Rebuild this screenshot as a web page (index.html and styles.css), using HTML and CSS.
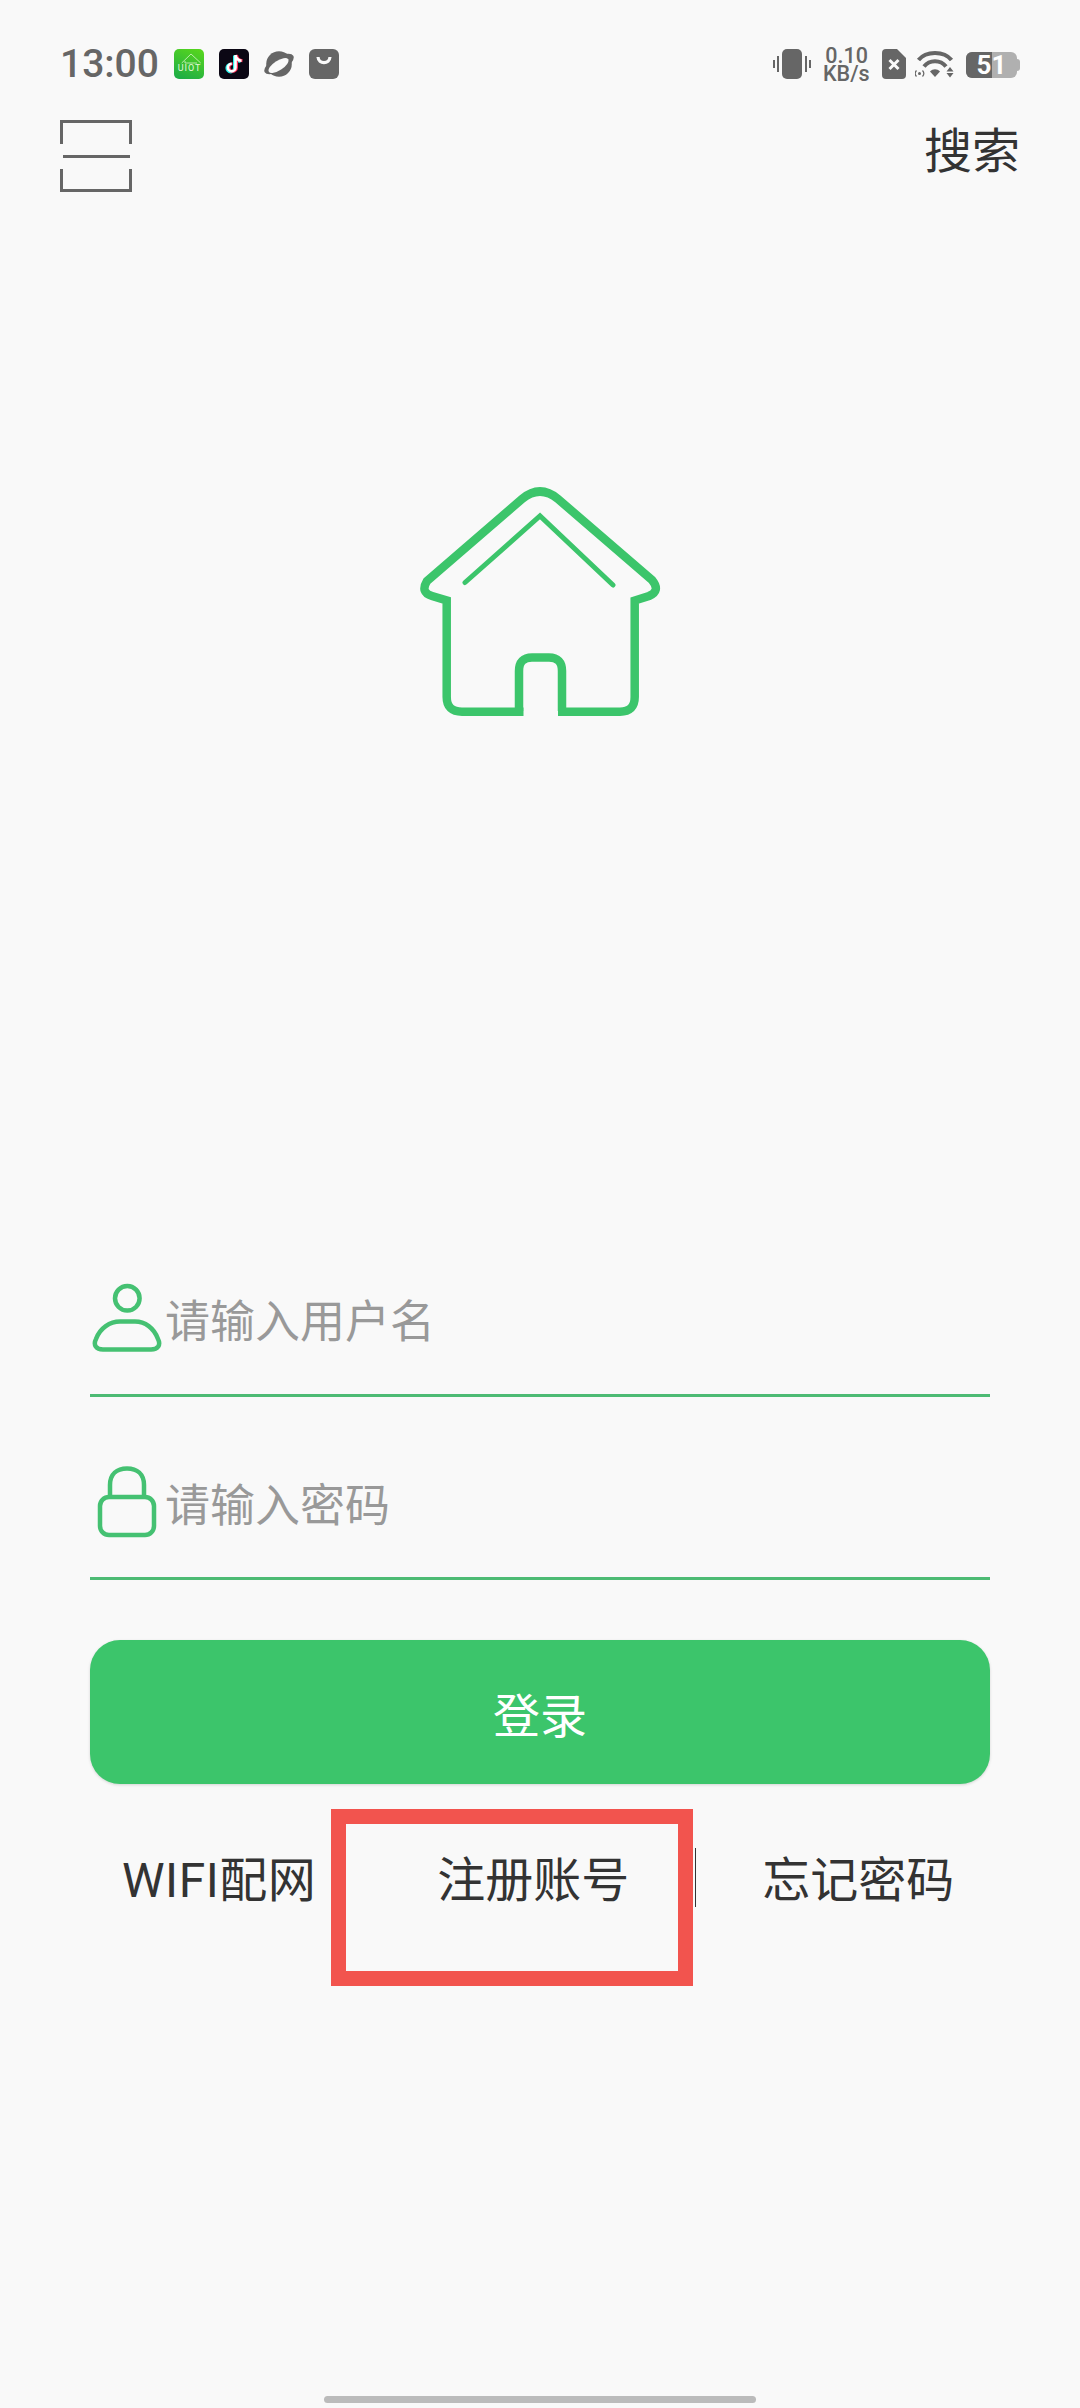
FILE: index.html
```html
<!DOCTYPE html>
<html>
	<head>
		<meta charset="utf8">
		<title>登录</title>
		<link rel="stylesheet" href="styles.css">
	</head>
	<body>
		<div id="page">
			<div id="status_bar">
				<div class="status_left">
					<span class="clock">13:00</span>
					<svg class="app_icon" viewBox="0 0 30 30">
						<defs>
							<linearGradient id="uiot_bg" x1="0.7" y1="0" x2="0.3" y2="1">
								<stop offset="0" stop-color="#55d41f"/>
								<stop offset="1" stop-color="#1fae45"/>
							</linearGradient>
						</defs>
						<rect width="30" height="30" rx="5" fill="url(#uiot_bg)"/>
						<path d="M7.7 14 L17 5 L26.7 14 M11 12 V14 H23" fill="none" stroke="#d8f5c8" stroke-width="0.8"/>
						<text x="15.5" y="22" class="uiot_text">UIOT</text>
					</svg>
					<svg class="app_icon" viewBox="0 0 30 30">
						<rect width="30" height="30" rx="5" fill="#0b0714"/>
						<path d="M16.5 6 V18.5 A3.8 3.8 0 1 1 12.7 14.7 M16.5 6 C17 9.5 19.5 11.5 22.5 11.8" fill="none" stroke="#25f4ee" stroke-width="3" transform="translate(-1 0.6)"/>
						<path d="M16.5 6 V18.5 A3.8 3.8 0 1 1 12.7 14.7 M16.5 6 C17 9.5 19.5 11.5 22.5 11.8" fill="none" stroke="#fe2c55" stroke-width="3" transform="translate(1 0)"/>
						<path d="M16.5 6 V18.5 A3.8 3.8 0 1 1 12.7 14.7 M16.5 6 C17 9.5 19.5 11.5 22.5 11.8" fill="none" stroke="#fff" stroke-width="2.6"/>
					</svg>
					<svg class="app_icon" viewBox="0 0 30 30">
						<circle cx="15" cy="15" r="12.8" fill="#666"/>
						<ellipse cx="15" cy="15" rx="16.5" ry="7" transform="rotate(-30 15 15)" fill="#666"/>
						<ellipse cx="14.5" cy="16.5" rx="11.5" ry="4.8" transform="rotate(-33 14.5 16.5)" fill="#f9f9f9"/>
					</svg>
					<svg class="app_icon" viewBox="0 0 30 30">
						<rect width="30" height="30" rx="6" fill="#666"/>
						<path d="M9 8 C9.5 15.5 20.5 15.5 21 8" fill="none" stroke="#f9f9f9" stroke-width="3.2"/>
					</svg>
				</div>
				<div class="status_right">
					<svg class="icon_vibrate" viewBox="0 0 38 30">
						<rect x="9" y="0" width="20" height="30" rx="5" fill="#666"/>
						<path d="M5 7 V23 M1 11 V19 M33 7 V23 M37 11 V19" stroke="#666" stroke-width="2" fill="none"/>
					</svg>
					<div class="net_speed">0.10<br>KB/s</div>
					<svg class="icon_sim" viewBox="0 0 24 30">
						<path d="M4 0 H15 L24 9 V26 A4 4 0 0 1 20 30 H4 A4 4 0 0 1 0 26 V4 A4 4 0 0 1 4 0 Z" fill="#666"/>
						<path d="M7.5 11 L16.5 20 M16.5 11 L7.5 20" stroke="#f9f9f9" stroke-width="3" fill="none"/>
					</svg>
					<svg class="icon_wifi" viewBox="0 0 40 28">
						<path d="M3.5 10 C11 0.5 29 0.5 36.5 10" fill="none" stroke="#666" stroke-width="4"/>
						<path d="M9 16.5 C14.5 9.5 25.5 9.5 31 16.5" fill="none" stroke="#666" stroke-width="4"/>
						<path d="M15 21.5 L20 27 L25 21.5 C22 18.5 18 18.5 15 21.5 Z" fill="#666"/>
						<circle cx="4.5" cy="23.5" r="1.5" fill="#666"/>
						<path d="M1.5 20.5 A4.5 4.5 0 0 0 1.5 26.5 M7.5 20.5 A4.5 4.5 0 0 1 7.5 26.5" fill="none" stroke="#666" stroke-width="1.2"/>
						<path d="M35 17 L38.5 21.5 H31.5 Z M31.5 23 H38.5 L35 27.5 Z" fill="#666"/>
					</svg>
					<div class="battery">
						<div class="battery_body">
							<div class="battery_fill"></div>
							<span class="battery_num">51</span>
						</div>
						<div class="battery_cap"></div>
					</div>
				</div>
			</div>

			<div id="top_bar">
				<svg class="icon_scan" viewBox="0 0 72 72">
					<path d="M1.5 24 V1.5 H70.5 V24 M1.5 49 V70.5 H70.5 V49" fill="none" stroke="#666" stroke-width="3"/>
					<path d="M3 36.5 H70" fill="none" stroke="#666" stroke-width="3"/>
				</svg>
				<span class="search_btn">搜索</span>
			</div>

			<svg class="logo" viewBox="0 0 280 260">
				<path class="logo_line" d="M123.5 241.7 H62 Q46.7 241.7 46.7 227 V130.5 L32 126 Q20 122.5 27 111 L122 29 Q140 14 158 29 L252 110 Q261 121 249 126 L234.7 130.5 V227 Q234.7 241.7 220 241.7 H158"/>
				<path class="logo_line" d="M119 241 V201 Q119 187.5 132 187.5 H149 Q162 187.5 162 201 V241"/>
				<path class="logo_roof" d="M65 112.5 L140 46 L213 115"/>
			</svg>

			<div id="login_form">
				<div class="field field_user">
					<svg class="field_icon" viewBox="0 0 72 72">
						<circle cx="37.3" cy="16.3" r="12.3" class="field_line"/>
						<path class="field_line" d="M13 67.5 C6 67.5 3 63 6 57 C10 46 20 39.5 30 39.5 H45 C55 39.5 64 46 68 57 C71 63 68 67.5 61 67.5 Z"/>
					</svg>
					<span class="field_text">请输入用户名</span>
				</div>
				<div class="field field_pwd">
					<svg class="field_icon" viewBox="0 0 72 72">
						<path class="field_line" d="M20 31 V19 C20 8 27 2.5 37 2.5 C47 2.5 54 8 54 19 V31"/>
						<rect class="field_line" x="10" y="31" width="54" height="38" rx="9"/>
					</svg>
					<span class="field_text">请输入密码</span>
				</div>
				<div class="login_btn">登录</div>
			</div>

			<div id="links">
				<span class="link link_wifi">WIFI配网</span>
				<span class="link link_reg">注册账号</span>
				<span class="link_sep"></span>
				<span class="link link_forget">忘记密码</span>
				<div class="mark_box"></div>
			</div>

			<div class="home_bar"></div>
		</div>
	</body>
</html>
```

FILE: styles.css
```css
*{
	box-sizing:border-box;
}
html,body{
	margin:0;
	padding:0;
}
body{
	background:#f9f9f9;
	font-family:"Roboto","Noto Sans CJK SC",sans-serif;
}
#page{
	width:1080px;
	height:2408px;
	overflow:hidden;
	display:flex;
	flex-direction:column;
	align-items:center;
}
#status_bar{
	width:100%;
	height:120px;
	padding:47px 60px 0 60px;
	display:flex;
	justify-content:space-between;
	align-items:flex-start;
}
.status_left{
	display:flex;
	align-items:center;
	height:34px;
}
.clock{
	width:114px;
	font-size:39px;
	font-weight:500;
	line-height:34px;
	color:#666;
}
.app_icon{
	width:30px;
	height:30px;
	margin-right:15px;
}
.uiot_text{
	font-size:9px;
	fill:#e6f8d8;
	text-anchor:middle;
	letter-spacing:1px;
}
.status_right{
	display:flex;
	align-items:flex-start;
	height:34px;
}
.icon_vibrate{
	width:38px;
	height:30px;
	margin:2px 12px 0 0;
}
.net_speed{
	width:45px;
	margin-right:14px;
	font-size:21.5px;
	font-weight:500;
	line-height:18px;
	text-align:right;
	white-space:nowrap;
	color:#666;
}
.icon_sim{
	width:24px;
	height:30px;
	margin:2px 9px 0 0;
}
.icon_wifi{
	width:40px;
	height:28px;
	margin:3px 11px 0 0;
}
.battery{
	display:flex;
	align-items:center;
	margin-top:5px;
}
.battery_body{
	width:51px;
	height:26px;
	border-radius:6px;
	background:#b0b0b0;
	position:relative;
	display:flex;
	align-items:center;
	justify-content:center;
}
.battery_fill{
	position:absolute;
	left:0;
	top:0;
	bottom:0;
	width:26px;
	border-radius:6px 0 0 6px;
	background:#666;
}
.battery_num{
	position:relative;
	font-size:26px;
	font-weight:700;
	line-height:26px;
	color:#fff;
}
.battery_cap{
	width:3px;
	height:12px;
	border-radius:0 3px 3px 0;
	background:#b0b0b0;
}
#top_bar{
	width:100%;
	height:72px;
	padding:0 60px;
	display:flex;
	justify-content:space-between;
	align-items:center;
}
.icon_scan{
	width:72px;
	height:72px;
}
.search_btn{
	font-size:48px;
	line-height:60px;
	color:#333;
	margin-top:-8px;
}
.logo{
	width:280px;
	height:260px;
	margin-top:278px;
}
.logo_line,.logo_roof{
	fill:none;
	stroke:#3cc56b;
}
.logo_line{
	stroke-width:8.5;
}
.logo_roof{
	stroke-width:5;
	stroke-linecap:round;
}
#login_form{
	width:900px;
	margin-top:539px;
	display:flex;
	flex-direction:column;
}
.field{
	border-bottom:3px solid #4dbb74;
	display:flex;
	align-items:flex-start;
}
.field_user{
	height:128px;
	padding-top:13px;
}
.field_pwd{
	height:183px;
	padding-top:69px;
}
.field_icon{
	width:72px;
	height:72px;
	flex:none;
}
.field_line{
	fill:none;
	stroke:#45c172;
	stroke-width:4.5;
}
.field_text{
	font-size:45px;
	line-height:60px;
	color:#999;
	margin:11px 0 0 3px;
}
.login_btn{
	height:144px;
	margin-top:60px;
	border-radius:30px;
	background:#3cc56b;
	box-shadow:0 1px 3px rgba(0,0,0,0.15);
	color:#fff;
	font-size:47px;
	display:flex;
	align-items:center;
	justify-content:center;
}
#links{
	width:900px;
	height:176px;
	margin-top:25px;
	position:relative;
	display:flex;
	align-items:flex-start;
	color:#333;
}
.link{
	font-size:48px;
	line-height:60px;
	margin-top:42px;
}
.link_wifi{
	margin-left:32px;
	letter-spacing:0.5px;
}
.link_reg{
	margin-left:121px;
}
.link_sep{
	width:1px;
	height:59px;
	margin:39px 0 0 66px;
	background:#333;
}
.link_forget{
	margin-left:66px;
}
/* red annotation box over the register link */
.mark_box{
	position:absolute;
	left:241px;
	top:0;
	width:362px;
	height:177px;
	border:15px solid #f2544e;
}
.home_bar{
	width:432px;
	height:7px;
	margin-top:411px;
	border-radius:4px;
	background:#bbb;
}
```
